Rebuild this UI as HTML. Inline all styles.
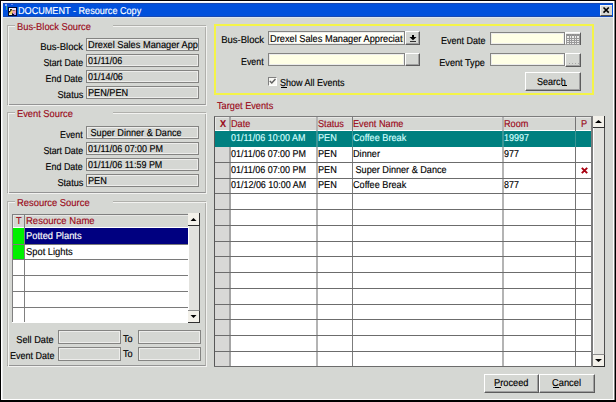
<!DOCTYPE html><html><head><meta charset="utf-8"><style>
html,body{margin:0;padding:0;}
body{width:616px;height:402px;position:relative;overflow:hidden;background:#d5d7d3;font-family:"Liberation Sans",sans-serif;}
.a{position:absolute;}
.t{position:absolute;font-size:10px;line-height:10px;white-space:pre;color:#000;transform:scaleX(0.91);text-rendering:geometricPrecision;-webkit-text-stroke-width:0.15px;transform-origin:0 0;}
.r{transform-origin:100% 0;}
</style></head><body>
<div class="a" style="left:0px;top:0px;width:616px;height:402px;box-sizing:border-box;border:1px solid #000;"></div>
<div class="a" style="left:1px;top:1px;width:613px;height:399px;box-sizing:border-box;border:1px solid #fff;"></div>
<div class="a" style="left:614px;top:1px;width:1px;height:399px;background:#808080;"></div>
<div class="a" style="left:2px;top:2px;width:611px;height:1px;background:#eef2f6;"></div>
<div class="a" style="left:2px;top:2px;width:1px;height:397px;background:#eceeee;"></div>
<div class="a" style="left:0px;top:400px;width:616px;height:2px;background:#000;"></div>
<div class="a" style="left:3px;top:3px;width:610px;height:14px;background:#0050dc;box-shadow:inset 0 1px 0 #1848b0, inset 0 -1px 0 #1848b0;"></div>
<div class="a" style="left:3px;top:17px;width:610px;height:1px;background:#dce6f0;"></div>
<svg class="a" style="left:4px;top:3px" width="14" height="14" viewBox="0 0 14 14"><rect x="1" y="1" width="2" height="2" fill="#8fb0ff"/><rect x="7" y="1" width="2" height="1" fill="#6080ff"/><rect x="2" y="3" width="1" height="4" fill="#40b090"/><rect x="3" y="2" width="2" height="1" fill="#2050c0"/><rect x="4" y="4" width="9" height="9" fill="#000830"/><rect x="5" y="5" width="3" height="3" fill="#ffffff"/><rect x="8" y="5" width="4" height="2" fill="#f0e0f0"/><rect x="6" y="6" width="2" height="2" fill="#303020"/><path d="M5 12L5 10L8 7L10 8L7 12Z" fill="#f0d860"/><path d="M8 8L12 7L12 11L9 11Z" fill="#f0a0b0"/><rect x="10" y="10" width="2" height="2" fill="#b090f0"/><rect x="5" y="11" width="3" height="1" fill="#f8f0c0"/></svg>
<div class="t" style="left:18px;top:7px;transform:scaleX(0.91);color:#fff;">DOCUMENT - Resource Copy</div>
<div class="a" style="left:600px;top:5px;width:12px;height:11px;box-sizing:border-box;background:#d8d8d4;border-top:1px solid #f4f4f4;border-left:1px solid #f4f4f4;border-bottom:1px solid #505050;"></div>
<svg class="a" style="left:602px;top:6px" width="9" height="8" viewBox="0 0 9 8"><path d="M1.5 1.5L6.8 6.6M6.8 1.5L1.5 6.6" stroke="#000" stroke-width="1.6"/></svg>
<div class="a" style="left:7px;top:25px;width:199px;height:80px;box-sizing:border-box;border:1px solid #b0b0ac;border-bottom-color:#949494;"></div>
<div class="a" style="left:8px;top:26px;width:199px;height:80px;box-sizing:border-box;border:1px solid #f2f2f0;"></div>
<div class="a" style="left:15px;top:25px;width:98px;height:2px;background:#d5d7d3;"></div>
<div class="t" style="left:17px;top:23px;transform:scaleX(0.93);color:#9a0818;">Bus-Block Source</div>
<div class="a" style="left:7px;top:112px;width:199px;height:81px;box-sizing:border-box;border:1px solid #b0b0ac;border-bottom-color:#949494;"></div>
<div class="a" style="left:8px;top:113px;width:199px;height:81px;box-sizing:border-box;border:1px solid #f2f2f0;"></div>
<div class="a" style="left:15px;top:112px;width:98px;height:2px;background:#d5d7d3;"></div>
<div class="t" style="left:17px;top:110px;transform:scaleX(0.93);color:#9a0818;">Event Source</div>
<div class="a" style="left:7px;top:201px;width:199px;height:165px;box-sizing:border-box;border:1px solid #b0b0ac;border-bottom-color:#949494;"></div>
<div class="a" style="left:8px;top:202px;width:199px;height:165px;box-sizing:border-box;border:1px solid #f2f2f0;"></div>
<div class="a" style="left:15px;top:201px;width:98px;height:2px;background:#d5d7d3;"></div>
<div class="t" style="left:17px;top:199px;transform:scaleX(0.94);color:#9a0818;">Resource Source</div>
<div class="t r" style="right:533px;top:43px;transform:scaleX(0.95);">Bus-Block</div>
<div class="a" style="left:86px;top:38px;width:113px;height:13px;box-sizing:border-box;border:1px solid #848482;background:#d5d7d3;box-shadow:inset 1px 1px 0 #ededeb, inset -1px -1px 0 #ededeb;"></div>
<div class="a" style="left:87px;top:39px;width:111px;height:11px;overflow:hidden;"><div class="t" style="left:1px;top:2px;transform:scaleX(0.924);">Drexel Sales Manager Appreciation</div></div>
<div class="t r" style="right:533px;top:59px;transform:scaleX(0.88);">Start Date</div>
<div class="a" style="left:86px;top:54px;width:113px;height:13px;box-sizing:border-box;border:1px solid #848482;background:#d5d7d3;box-shadow:inset 1px 1px 0 #ededeb, inset -1px -1px 0 #ededeb;"></div>
<div class="a" style="left:87px;top:55px;width:111px;height:11px;overflow:hidden;"><div class="t" style="left:1px;top:2px;transform:scaleX(0.895);">01/11/06</div></div>
<div class="t r" style="right:533px;top:75px;transform:scaleX(0.89);">End Date</div>
<div class="a" style="left:86px;top:70px;width:113px;height:13px;box-sizing:border-box;border:1px solid #848482;background:#d5d7d3;box-shadow:inset 1px 1px 0 #ededeb, inset -1px -1px 0 #ededeb;"></div>
<div class="a" style="left:87px;top:71px;width:111px;height:11px;overflow:hidden;"><div class="t" style="left:1px;top:2px;transform:scaleX(0.895);">01/14/06</div></div>
<div class="t r" style="right:533px;top:91px;transform:scaleX(0.915);">Status</div>
<div class="a" style="left:86px;top:86px;width:113px;height:13px;box-sizing:border-box;border:1px solid #848482;background:#d5d7d3;box-shadow:inset 1px 1px 0 #ededeb, inset -1px -1px 0 #ededeb;"></div>
<div class="a" style="left:87px;top:87px;width:111px;height:11px;overflow:hidden;"><div class="t" style="left:1px;top:2px;transform:scaleX(0.915);">PEN/PEN</div></div>
<div class="t r" style="right:533px;top:131px;transform:scaleX(0.88);">Event</div>
<div class="a" style="left:86px;top:126px;width:113px;height:13px;box-sizing:border-box;border:1px solid #848482;background:#d5d7d3;box-shadow:inset 1px 1px 0 #ededeb, inset -1px -1px 0 #ededeb;"></div>
<div class="a" style="left:87px;top:127px;width:111px;height:11px;overflow:hidden;"><div class="t" style="left:1px;top:2px;transform:scaleX(0.91);"> Super Dinner &amp; Dance</div></div>
<div class="t r" style="right:533px;top:147px;transform:scaleX(0.88);">Start Date</div>
<div class="a" style="left:86px;top:142px;width:113px;height:13px;box-sizing:border-box;border:1px solid #848482;background:#d5d7d3;box-shadow:inset 1px 1px 0 #ededeb, inset -1px -1px 0 #ededeb;"></div>
<div class="a" style="left:87px;top:143px;width:111px;height:11px;overflow:hidden;"><div class="t" style="left:1px;top:2px;transform:scaleX(0.895);">01/11/06 07:00 PM</div></div>
<div class="t r" style="right:533px;top:163px;transform:scaleX(0.89);">End Date</div>
<div class="a" style="left:86px;top:158px;width:113px;height:13px;box-sizing:border-box;border:1px solid #848482;background:#d5d7d3;box-shadow:inset 1px 1px 0 #ededeb, inset -1px -1px 0 #ededeb;"></div>
<div class="a" style="left:87px;top:159px;width:111px;height:11px;overflow:hidden;"><div class="t" style="left:1px;top:2px;transform:scaleX(0.895);">01/11/06 11:59 PM</div></div>
<div class="t r" style="right:533px;top:179px;transform:scaleX(0.915);">Status</div>
<div class="a" style="left:86px;top:174px;width:113px;height:13px;box-sizing:border-box;border:1px solid #848482;background:#d5d7d3;box-shadow:inset 1px 1px 0 #ededeb, inset -1px -1px 0 #ededeb;"></div>
<div class="a" style="left:87px;top:175px;width:111px;height:11px;overflow:hidden;"><div class="t" style="left:1px;top:2px;transform:scaleX(0.915);">PEN</div></div>
<div class="a" style="left:12px;top:214px;width:177px;height:109px;box-sizing:border-box;background:#fff;border-left:1px solid #808080;border-top:1px solid #808080;"></div>
<div class="a" style="left:13px;top:215px;width:175px;height:13px;background:#d5d7d3;box-shadow:inset 1px 1px 0 #e8e8e6;"></div>
<div class="a" style="left:13px;top:227px;width:175px;height:1px;background:#fff;"></div>
<div class="a" style="left:24px;top:215px;width:1px;height:107px;background:#808080;"></div>
<div class="t" style="left:16px;top:217px;transform:scaleX(0.915);color:#9a0818;">T</div>
<div class="t" style="left:26px;top:217px;transform:scaleX(0.95);color:#9a0818;">Resource Name</div>
<div class="a" style="left:13px;top:228px;width:11px;height:31px;background:#00f000;"></div>
<div class="a" style="left:25px;top:228px;width:163px;height:16px;background:#000080;"></div>
<div class="a" style="left:13px;top:244px;width:175px;height:1px;background:#7a7a7a;"></div>
<div class="a" style="left:13px;top:259px;width:175px;height:1px;background:#7a7a7a;"></div>
<div class="a" style="left:13px;top:275px;width:175px;height:1px;background:#7a7a7a;"></div>
<div class="a" style="left:13px;top:291px;width:175px;height:1px;background:#7a7a7a;"></div>
<div class="a" style="left:13px;top:307px;width:175px;height:1px;background:#7a7a7a;"></div>
<div class="a" style="left:12px;top:322px;width:177px;height:1px;background:#fff;"></div>
<div class="t" style="left:26px;top:232px;transform:scaleX(0.935);color:#fff;">Potted Plants</div>
<div class="t" style="left:26px;top:248px;transform:scaleX(0.935);">Spot Lights</div>
<div class="a" style="left:188px;top:213px;width:1px;height:110px;background:#fff;"></div>
<div class="a" style="left:189px;top:213px;width:10px;height:110px;background:#e2e2de;"></div>
<div class="a" style="left:199px;top:213px;width:1px;height:110px;background:#505050;"></div>
<div class="a" style="left:188px;top:213px;width:12px;height:13px;box-sizing:border-box;background:#f3f1ea;border-right:1px solid #303030;border-bottom:1px solid #303030;"></div>
<svg class="a" style="left:0;top:0" width="616" height="402"><path d="M190.5 221L193.5 218L196.5 221Z" fill="#000"/></svg>
<div class="a" style="left:188px;top:310px;width:12px;height:13px;box-sizing:border-box;background:#f3f1ea;border-top:1px solid #8c8c8c;border-right:1px solid #303030;border-bottom:1px solid #303030;"></div>
<svg class="a" style="left:0;top:0" width="616" height="402"><path d="M190.5 315L193.5 318L196.5 315Z" fill="#000"/></svg>
<div class="t r" style="right:562px;top:336px;transform:scaleX(0.92);">Sell Date</div>
<div class="t r" style="right:562px;top:352px;transform:scaleX(0.9);">Event Date</div>
<div class="a" style="left:58px;top:330px;width:63px;height:14px;box-sizing:border-box;border:1px solid #848482;background:#d5d7d3;box-shadow:inset 1px 1px 0 #ededeb, inset -1px -1px 0 #ededeb;"></div>
<div class="a" style="left:58px;top:347px;width:63px;height:14px;box-sizing:border-box;border:1px solid #848482;background:#d5d7d3;box-shadow:inset 1px 1px 0 #ededeb, inset -1px -1px 0 #ededeb;"></div>
<div class="t" style="left:123px;top:335px;transform:scaleX(0.915);">To</div>
<div class="t" style="left:123px;top:350px;transform:scaleX(0.915);">To</div>
<div class="a" style="left:138px;top:330px;width:63px;height:14px;box-sizing:border-box;border:1px solid #848482;background:#d5d7d3;box-shadow:inset 1px 1px 0 #ededeb, inset -1px -1px 0 #ededeb;"></div>
<div class="a" style="left:138px;top:347px;width:63px;height:14px;box-sizing:border-box;border:1px solid #848482;background:#d5d7d3;box-shadow:inset 1px 1px 0 #ededeb, inset -1px -1px 0 #ededeb;"></div>
<div class="a" style="left:214px;top:24px;width:380px;height:71px;box-sizing:border-box;border:2px solid #f4f448;"></div>
<div class="t r" style="right:352px;top:36px;transform:scaleX(0.95);">Bus-Block</div>
<div class="t r" style="right:352px;top:58px;transform:scaleX(0.88);">Event</div>
<div class="a" style="left:268px;top:31px;width:137px;height:14px;box-sizing:border-box;border:1px solid #848482;background:#fffff8;box-shadow:inset 1px 1px 0 #ededeb, inset -1px -1px 0 #ededeb;"></div>
<div class="a" style="left:269px;top:32px;width:134px;height:12px;overflow:hidden;"><div class="t" style="left:1px;top:3px;transform:scaleX(0.924);">Drexel Sales Manager Appreciation</div></div>
<div class="a" style="left:405px;top:31px;width:15px;height:14px;box-sizing:border-box;background:#d5d7d3;border-top:1px solid #ffffff;border-left:1px solid #ffffff;border-right:1px solid #5c5c5c;border-bottom:1px solid #5c5c5c;box-shadow:inset -1px -1px 0 #a0a0a0;"></div>
<svg class="a" style="left:409px;top:35px" width="8" height="8"><path d="M3 0h2v2h2.5L4 5.2L0.5 2h2.5Z" fill="#000"/><rect x="1" y="6" width="6" height="1" fill="#303030"/></svg>
<div class="a" style="left:268px;top:53px;width:137px;height:13px;box-sizing:border-box;border:1px solid #848482;background:#ffffe6;box-shadow:inset 1px 1px 0 #ededeb, inset -1px -1px 0 #ededeb;"></div>
<div class="a" style="left:405px;top:53px;width:15px;height:13px;box-sizing:border-box;background:#d5d7d3;border-top:1px solid #ffffff;border-left:1px solid #ffffff;border-right:1px solid #5c5c5c;border-bottom:1px solid #5c5c5c;box-shadow:inset -1px -1px 0 #a0a0a0;"></div>
<div class="a" style="left:268px;top:77px;width:9px;height:9px;box-sizing:border-box;background:#f8f8f4;border-top:1px solid #808080;border-left:1px solid #808080;border-right:1px solid #fff;border-bottom:1px solid #fff;"></div>
<svg class="a" style="left:269px;top:78px" width="7" height="7"><path d="M0.8 3L2.8 5L6.5 1" stroke="#606060" stroke-width="1.5" fill="none"/></svg>
<div class="t" style="left:280px;top:79px;transform:scaleX(0.9);">Show All Events</div>
<div class="a" style="left:281px;top:87px;width:6px;height:1px;background:#000;"></div>
<div class="t r" style="right:131px;top:37px;transform:scaleX(0.9);">Event Date</div>
<div class="t r" style="right:131px;top:59px;transform:scaleX(0.915);">Event Type</div>
<div class="a" style="left:490px;top:32px;width:75px;height:13px;box-sizing:border-box;border:1px solid #848482;background:#ffffe6;box-shadow:inset 1px 1px 0 #ededeb, inset -1px -1px 0 #ededeb;"></div>
<div class="a" style="left:565px;top:32px;width:16px;height:13px;box-sizing:border-box;background:#d5d7d3;border-top:1px solid #ffffff;border-left:1px solid #ffffff;border-right:1px solid #5c5c5c;border-bottom:1px solid #5c5c5c;box-shadow:inset -1px -1px 0 #a0a0a0;"></div>
<svg class="a" style="left:566px;top:33px" width="14" height="12"><rect x="0" y="0" width="14" height="12" fill="#ececea"/><rect x="0" y="1" width="14" height="2" fill="#909090"/><rect x="0" y="5" width="14" height="1" fill="#9a9a9a"/><rect x="0" y="7" width="14" height="1" fill="#9a9a9a"/><rect x="0" y="9" width="14" height="1" fill="#9a9a9a"/><rect x="0" y="11" width="14" height="1" fill="#9a9a9a"/><rect x="0" y="1" width="1" height="11" fill="#9a9a9a"/><rect x="3" y="1" width="1" height="11" fill="#9a9a9a"/><rect x="5" y="1" width="1" height="11" fill="#9a9a9a"/><rect x="8" y="1" width="1" height="11" fill="#9a9a9a"/><rect x="10" y="1" width="1" height="11" fill="#9a9a9a"/><rect x="13" y="1" width="1" height="11" fill="#9a9a9a"/></svg>
<div class="a" style="left:490px;top:53px;width:75px;height:13px;box-sizing:border-box;border:1px solid #848482;background:#ffffe6;box-shadow:inset 1px 1px 0 #ededeb, inset -1px -1px 0 #ededeb;"></div>
<div class="a" style="left:565px;top:53px;width:16px;height:14px;box-sizing:border-box;background:#d5d7d3;border-top:1px solid #ffffff;border-left:1px solid #ffffff;border-right:1px solid #5c5c5c;border-bottom:1px solid #5c5c5c;box-shadow:inset -1px -1px 0 #a0a0a0;"></div>
<svg class="a" style="left:567px;top:63px" width="12" height="2"><rect x="2" y="0" width="1" height="1" fill="#a8a8a8"/><rect x="5" y="0" width="1" height="1" fill="#a8a8a8"/><rect x="8" y="0" width="1" height="1" fill="#a8a8a8"/><rect x="11" y="0" width="1" height="1" fill="#a8a8a8"/></svg>
<div class="a" style="left:525px;top:72px;width:56px;height:19px;box-sizing:border-box;background:#d5d7d3;border-top:1px solid #ffffff;border-left:1px solid #ffffff;border-right:1px solid #5c5c5c;border-bottom:1px solid #5c5c5c;box-shadow:inset -1px -1px 0 #a0a0a0;"></div>
<div class="t" style="left:537px;top:78px;transform:scaleX(0.905);">Search</div>
<div class="a" style="left:562px;top:85px;width:5px;height:1px;background:#000;"></div>
<div class="t" style="left:217px;top:102px;transform:scaleX(0.92);color:#9a0818;">Target Events</div>
<div class="a" style="left:214px;top:116px;width:379px;height:251px;box-sizing:border-box;background:#fff;border-left:1px solid #585858;border-top:1px solid #7c7c7c;"></div>
<div class="a" style="left:215px;top:117px;width:377px;height:13px;background:#d5d7d3;box-shadow:inset 1px 1px 0 #e8e8e6;"></div>
<div class="a" style="left:215px;top:130px;width:377px;height:1px;background:#fff;"></div>
<div class="a" style="left:215px;top:131px;width:14px;height:236px;background:#d8d8d6;"></div>
<div class="a" style="left:229px;top:117px;width:2px;height:250px;background:#a4a4a4;"></div>
<div class="a" style="left:316px;top:117px;width:2px;height:250px;background:#b4b4b4;"></div>
<div class="a" style="left:352px;top:117px;width:1px;height:250px;background:#7c7c7c;"></div>
<div class="a" style="left:502px;top:117px;width:2px;height:250px;background:#b4b4b4;"></div>
<div class="a" style="left:575px;top:117px;width:1px;height:250px;background:#747474;"></div>
<div class="a" style="left:215px;top:131px;width:377px;height:16px;background:#008080;"></div>
<div class="a" style="left:316px;top:131px;width:2px;height:16px;background:#3a9494;"></div>
<div class="a" style="left:352px;top:131px;width:1px;height:16px;background:#3a9494;"></div>
<div class="a" style="left:502px;top:131px;width:2px;height:16px;background:#3a9494;"></div>
<div class="a" style="left:575px;top:131px;width:1px;height:16px;background:#3a9494;"></div>
<div class="a" style="left:215px;top:162px;width:376px;height:1px;background:#6c6c6c;"></div>
<div class="a" style="left:215px;top:178px;width:376px;height:1px;background:#6c6c6c;"></div>
<div class="a" style="left:215px;top:193px;width:376px;height:1px;background:#6c6c6c;"></div>
<div class="a" style="left:215px;top:209px;width:376px;height:1px;background:#6c6c6c;"></div>
<div class="a" style="left:215px;top:225px;width:376px;height:1px;background:#6c6c6c;"></div>
<div class="a" style="left:215px;top:241px;width:376px;height:1px;background:#6c6c6c;"></div>
<div class="a" style="left:215px;top:256px;width:376px;height:1px;background:#6c6c6c;"></div>
<div class="a" style="left:215px;top:272px;width:376px;height:1px;background:#6c6c6c;"></div>
<div class="a" style="left:215px;top:288px;width:376px;height:1px;background:#6c6c6c;"></div>
<div class="a" style="left:215px;top:304px;width:376px;height:1px;background:#6c6c6c;"></div>
<div class="a" style="left:215px;top:319px;width:376px;height:1px;background:#6c6c6c;"></div>
<div class="a" style="left:215px;top:335px;width:376px;height:1px;background:#6c6c6c;"></div>
<div class="a" style="left:215px;top:351px;width:376px;height:1px;background:#6c6c6c;"></div>
<div class="a" style="left:214px;top:366px;width:379px;height:1px;background:#6c6c6c;"></div>
<div class="a" style="left:591px;top:116px;width:2px;height:251px;background:#7c7c7c;"></div>
<div class="t" style="left:220px;top:120px;color:#980818;font-weight:bold;font-size:10px;">X</div>
<div class="t" style="left:231px;top:120px;transform:scaleX(0.915);color:#9a0818;">Date</div>
<div class="t" style="left:318px;top:120px;transform:scaleX(0.915);color:#9a0818;">Status</div>
<div class="t" style="left:353px;top:120px;transform:scaleX(0.915);color:#9a0818;">Event Name</div>
<div class="t" style="left:504px;top:120px;transform:scaleX(0.915);color:#9a0818;">Room</div>
<div class="t" style="left:581px;top:120px;transform:scaleX(0.915);color:#9a0818;">P</div>
<div class="t" style="left:231px;top:134px;transform:scaleX(0.895);color:#d4ffff;">01/11/06 10:00 AM</div>
<div class="t" style="left:318px;top:134px;transform:scaleX(0.915);color:#d4ffff;">PEN</div>
<div class="t" style="left:353px;top:134px;transform:scaleX(0.915);color:#d4ffff;">Coffee Break</div>
<div class="t" style="left:504px;top:134px;transform:scaleX(0.895);color:#d4ffff;">19997</div>
<div class="t" style="left:231px;top:150px;transform:scaleX(0.895);">01/11/06 07:00 PM</div>
<div class="t" style="left:318px;top:150px;transform:scaleX(0.915);">PEN</div>
<div class="t" style="left:353px;top:150px;transform:scaleX(0.915);">Dinner</div>
<div class="t" style="left:504px;top:150px;transform:scaleX(0.895);">977</div>
<div class="t" style="left:231px;top:166px;transform:scaleX(0.895);">01/11/06 07:00 PM</div>
<div class="t" style="left:318px;top:166px;transform:scaleX(0.915);">PEN</div>
<div class="t" style="left:353px;top:166px;transform:scaleX(0.91);"> Super Dinner &amp; Dance</div>
<div class="t" style="left:231px;top:181px;transform:scaleX(0.895);">01/12/06 10:00 AM</div>
<div class="t" style="left:318px;top:181px;transform:scaleX(0.915);">PEN</div>
<div class="t" style="left:353px;top:181px;transform:scaleX(0.915);">Coffee Break</div>
<div class="t" style="left:504px;top:181px;transform:scaleX(0.895);">877</div>
<svg class="a" style="left:581px;top:167px" width="7" height="7"><path d="M0.8 0.8L6.2 6.2M6.2 0.8L0.8 6.2" stroke="#a80010" stroke-width="1.9"/></svg>
<div class="a" style="left:593px;top:116px;width:1px;height:251px;background:#fff;"></div>
<div class="a" style="left:594px;top:116px;width:10px;height:251px;background:#e2e2de;"></div>
<div class="a" style="left:604px;top:116px;width:1px;height:251px;background:#505050;"></div>
<div class="a" style="left:593px;top:116px;width:12px;height:12px;box-sizing:border-box;background:#f3f1ea;border-right:1px solid #303030;border-bottom:1px solid #303030;"></div>
<svg class="a" style="left:0;top:0" width="616" height="402"><path d="M595.0 123L598.5 120L602.0 123Z" fill="#000"/></svg>
<div class="a" style="left:593px;top:354px;width:12px;height:13px;box-sizing:border-box;background:#f3f1ea;border-top:1px solid #8c8c8c;border-right:1px solid #303030;border-bottom:1px solid #303030;"></div>
<svg class="a" style="left:0;top:0" width="616" height="402"><path d="M595.0 359L598.5 362L602.0 359Z" fill="#000"/></svg>
<div class="a" style="left:484px;top:374px;width:55px;height:19px;box-sizing:border-box;background:#d5d7d3;border-top:1px solid #ffffff;border-left:1px solid #ffffff;border-right:1px solid #5c5c5c;border-bottom:1px solid #5c5c5c;box-shadow:inset -1px -1px 0 #a0a0a0;"></div>
<div class="t" style="left:494px;top:379px;transform:scaleX(0.925);">Proceed</div>
<div class="a" style="left:495px;top:387px;width:6px;height:1px;background:#000;"></div>
<div class="a" style="left:539px;top:374px;width:56px;height:19px;box-sizing:border-box;background:#d5d7d3;border-top:1px solid #ffffff;border-left:1px solid #ffffff;border-right:1px solid #5c5c5c;border-bottom:1px solid #5c5c5c;box-shadow:inset -1px -1px 0 #a0a0a0;"></div>
<div class="t" style="left:552px;top:379px;transform:scaleX(0.93);">Cancel</div>
<div class="a" style="left:553px;top:387px;width:6px;height:1px;background:#000;"></div>
</body></html>
